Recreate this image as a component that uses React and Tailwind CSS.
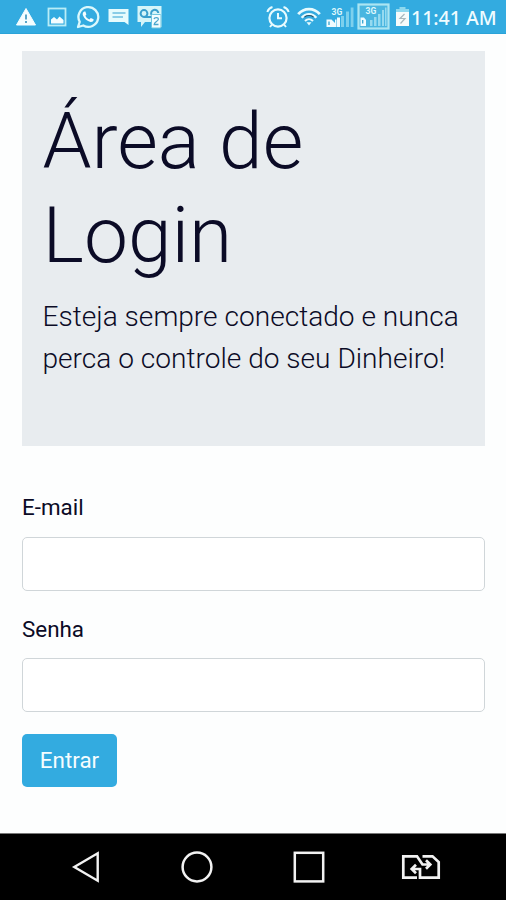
import React, { useState } from 'react';

const WarningIcon = () => (
  <svg width="22" height="20" viewBox="0 0 22 20" className="ml-[15px]">
    <path d="M11 1.5 L20.5 18 H1.5 Z" fill="#f4fdff" stroke="#f4fdff" strokeLinejoin="round" />
    <path d="M11 7.5 V12.5 M11 14 V16" stroke="#4a9dc4" strokeWidth="1.8" />
  </svg>
);

const PictureIcon = () => (
  <svg width="20" height="20" viewBox="0 0 20 20" className="ml-[10px]">
    <rect x="1.5" y="1.5" width="17" height="17" fill="none" stroke="#b9edf7" strokeWidth="1.8" />
    <path d="M4 16.5 V12.5 L7 10 L10 12.5 L12.5 9.5 L16.5 13 V16.5 Z" fill="#f4fdff" />
  </svg>
);

const WhatsappIcon = () => (
  <svg width="24" height="24" viewBox="0 0 24 24" className="ml-[9px]">
    <path
      d="M2 22 L3.7 16.8 A9.9 9.9 0 1 1 7.3 20.5 Z"
      fill="none"
      stroke="#dcf8fc"
      strokeWidth="2.3"
      strokeLinejoin="round"
    />
    <path
      d="M8.4 6.4 C7 6.8 6.2 8.4 7 10.6 C8.3 13.9 11.2 16.4 14.5 17 C16.6 17.2 17.9 15.9 17.6 14.3 L14.8 12.9 L13.4 14.4 C11.5 13.6 10.2 12.3 9.4 10.7 L10.4 9.4 L9.4 6.6 Z"
      fill="#f4fdff"
    />
  </svg>
);

const MessageIcon = () => (
  <svg width="22" height="18" viewBox="0 0 22 18" className="ml-[8px]">
    <path d="M0.5 1 H20.5 V17 L16.5 14 H0.5 Z" fill="#e6fbfd" />
    <path d="M4.5 5 H17.5 M4.5 9 H15" stroke="#6cbfdf" strokeWidth="1.5" />
  </svg>
);

const VoicemailIcon = () => (
  <svg width="26" height="24" viewBox="0 0 26 24" className="ml-[7px]">
    <path d="M0.5 1 H24.5 V22 H14 V17 H8 L4 22 V17 H0.5 Z" fill="#d5f5f9" />
    <circle cx="7" cy="8.5" r="3.4" fill="none" stroke="#3a9fcd" strokeWidth="2" />
    <path d="M7 12 H14 M14.5 10 A3.6 3.6 0 1 1 21.3 8" fill="none" stroke="#3a9fcd" strokeWidth="2" />
    <rect x="14.5" y="9.5" width="9.5" height="13.5" rx="1" fill="#f4fdff" stroke="#70c6df" />
    <path d="M17 14 C17.5 12 21.7 12 21.3 14.5 C21 16.2 17.2 17.2 17.2 19.5 H21.5" fill="none" stroke="#4aa6cc" strokeWidth="1.3" />
  </svg>
);

const AlarmIcon = () => (
  <svg width="24" height="24" viewBox="0 0 24 24" fill="none" stroke="#e8fbfe">
    <circle cx="12" cy="13" r="8.6" strokeWidth="2.2" />
    <path d="M12 8 V13.3 H16 M1.3 7 C2.2 4.5 4 2.7 6.5 2 M22.7 7 C21.8 4.5 20 2.7 17.5 2 M6 19.5 L4 22 M18 19.5 L20 22" strokeWidth="2" />
  </svg>
);

const WifiIcon = () => (
  <svg width="24" height="20" viewBox="0 0 24 20" fill="none" className="ml-[7px]">
    <path d="M1.2 7.2 C7 0.4 17 0.4 22.8 7.2" stroke="#e8fbfe" strokeWidth="2.8" />
    <path d="M4.6 10.7 C9 5.8 15 5.8 19.4 10.7" stroke="#e8fbfe" strokeWidth="2.2" />
    <path d="M7.5 9.9 C10 8.2 14 8.2 16.5 9.9" stroke="#28566b" strokeWidth="1.2" />
    <path d="M8 14 C10.3 11.7 13.7 11.7 16 14" stroke="#e8fbfe" strokeWidth="2" />
    <path d="M9.5 15.3 H14.5 L12 18.5 Z" fill="#e8fbfe" />
  </svg>
);

const SignalIcon = () => (
  <svg width="28" height="22" viewBox="0 0 28 22" className="ml-[5px]">
    <path d="M15 10 H18 V21 H15 Z M20 5.5 H23 V21 H20 Z M24.7 1.5 H27.5 V21 H24.7 Z" fill="#7dd0ed" />
    <path d="M0.5 13.5 H5.5 L7 15 L9 17 V13.5 H10.5 V21 H0.5 Z M11 11.5 H14 V21 H11 Z" fill="#f0fcff" />
    <path d="M3 15.5 V19" stroke="#35a4d1" strokeWidth="1.3" />
    <text x="5.5" y="8.5" fontSize="8.5" fontWeight="700" fill="#dff8fc" className="font-['Roboto',sans-serif]">3G</text>
  </svg>
);

const BoxedSignalIcon = () => (
  <svg width="33" height="27" viewBox="0 0 33 27" className="ml-[3px]">
    <rect x="1.5" y="1.5" width="30" height="24" fill="#4ab6e0" stroke="#abe5f2" strokeWidth="2.2" />
    <path d="M13 17 H15.5 V23 H13 Z M17 14 H19.5 V23 H17 Z M21 11 H23.5 V23 H21 Z M25 7 H27 V23 H25 Z M28 4.5 H29.5 V23 H28 Z" fill="#95daf0" />
    <path d="M3.5 14.5 H7 L9 17 V23 H3.5 Z" fill="#f0fcff" />
    <path d="M5.7 17 V20.5" stroke="#35a4d1" strokeWidth="1.3" />
    <text x="8.5" y="11" fontSize="8.5" fontWeight="700" fill="#dff8fc" className="font-['Roboto',sans-serif]">3G</text>
  </svg>
);

const BatteryIcon = () => (
  <svg width="15" height="21" viewBox="0 0 15 21" className="ml-[5px]">
    <path d="M4.5 1 H10.5 V3 H14 V7 H1 V3 H4.5 Z" fill="#8ed8ee" />
    <path d="M1 6 H14 V20 H1 Z" fill="#f6fbfb" />
    <path d="M9.5 8 L5 12.5 H10 L5.5 17.5" fill="none" stroke="#a9b9bd" strokeWidth="1.2" />
  </svg>
);

const StatusBar = () => (
  <header className="flex h-[34px] shrink-0 items-center bg-[#33abe0] border-b border-[#2aa3d8]">
    <WarningIcon />
    <PictureIcon />
    <WhatsappIcon />
    <MessageIcon />
    <VoicemailIcon />
    <div className="ml-auto flex items-center pr-[9px]">
      <AlarmIcon />
      <WifiIcon />
      <SignalIcon />
      <BoxedSignalIcon />
      <BatteryIcon />
      <span className="mt-[2px] ml-px w-[86px] whitespace-nowrap font-['Noto_Sans',sans-serif] text-[19.5px] leading-none font-medium text-[#effcff]">
        11:41 AM
      </span>
    </div>
  </header>
);

const NavigationBar = () => (
  <nav className="flex h-[67px] shrink-0 items-center border-t border-[#777] bg-black pl-[71px] text-[#f2f2f2]">
    <button type="button" aria-label="Voltar">
      <svg width="30" height="34" viewBox="0 0 30 34" fill="none" stroke="currentColor" strokeWidth="2.4">
        <path d="M26.7 3.3 V30.7 L3.3 17 Z" />
      </svg>
    </button>
    <button type="button" aria-label="Início" className="ml-[79px]">
      <svg width="34" height="34" viewBox="0 0 34 34" fill="none" stroke="currentColor" strokeWidth="2.5">
        <circle cx="17" cy="17" r="14.4" />
      </svg>
    </button>
    <button type="button" aria-label="Recentes" className="ml-[78px]">
      <svg width="34" height="34" viewBox="0 0 34 34" fill="none" stroke="currentColor" strokeWidth="2.5">
        <rect x="2.8" y="2.8" width="28.4" height="28.6" />
      </svg>
    </button>
    <button type="button" aria-label="Trocar chip" className="ml-[74px]">
      <svg width="42" height="28" viewBox="0 0 42 28" fill="none" stroke="currentColor" strokeWidth="2.7">
        <path d="M17 24.7 H3.3 V3.3 H17 L22.5 11.5 H30 M26 7.2 L30.3 11.5 L26 15.8" />
        <path d="M22.5 3.3 H32.5 L38.7 9 V24.7 H20 V16 H12 M16 11.7 L11.7 16 L16 20.3" />
      </svg>
    </button>
  </nav>
);

const App = () => {
  const [email, setEmail] = useState('');
  const [senha, setSenha] = useState('');

  const handleSubmit = (e) => {
    e.preventDefault();
  };

  return (
    <div className="flex h-[900px] w-[506px] flex-col overflow-hidden bg-[#fdfefe] font-['Roboto',sans-serif] text-[#0b0b26]">
      <StatusBar />

      <main className="flex-1 pt-[17px] pr-[21px] pl-[22px]">
        <section className="h-[395px] bg-[#e8ecef] pt-[42.5px] pl-[20.5px]">
          <h1 className="text-[78.5px] leading-[94.5px] font-light">
            Área de
            <br />
            Login
          </h1>
          <p className="mt-[13.5px] text-[28.1px] leading-[42.2px] font-light whitespace-nowrap">
            Esteja sempre conectado e nunca
            <br />
            perca o controle do seu Dinheiro!
          </p>
        </section>

        <form onSubmit={handleSubmit} className="pt-[44px] text-[22.4px]">
          <label htmlFor="email" className="block h-[47px] leading-[34px]">E-mail</label>
          <input
            id="email"
            type="email"
            value={email}
            onChange={(e) => setEmail(e.target.value)}
            className="mb-[21px] block h-[54px] w-full rounded-[5px] border-[1.4px] border-[#d0d6d9] bg-white px-4 outline-none"
          />
          <label htmlFor="senha" className="block h-[46px] leading-[34px]">Senha</label>
          <input
            id="senha"
            type="password"
            value={senha}
            onChange={(e) => setSenha(e.target.value)}
            className="mb-[22px] block h-[54px] w-full rounded-[5px] border-[1.4px] border-[#d0d6d9] bg-white px-4 outline-none"
          />
          <button type="submit" className="h-[53px] w-[95px] rounded-[5px] bg-[#33abe0] text-[#f6fdff]">
            Entrar
          </button>
        </form>
      </main>

      <NavigationBar />
    </div>
  );
};

export default App;
